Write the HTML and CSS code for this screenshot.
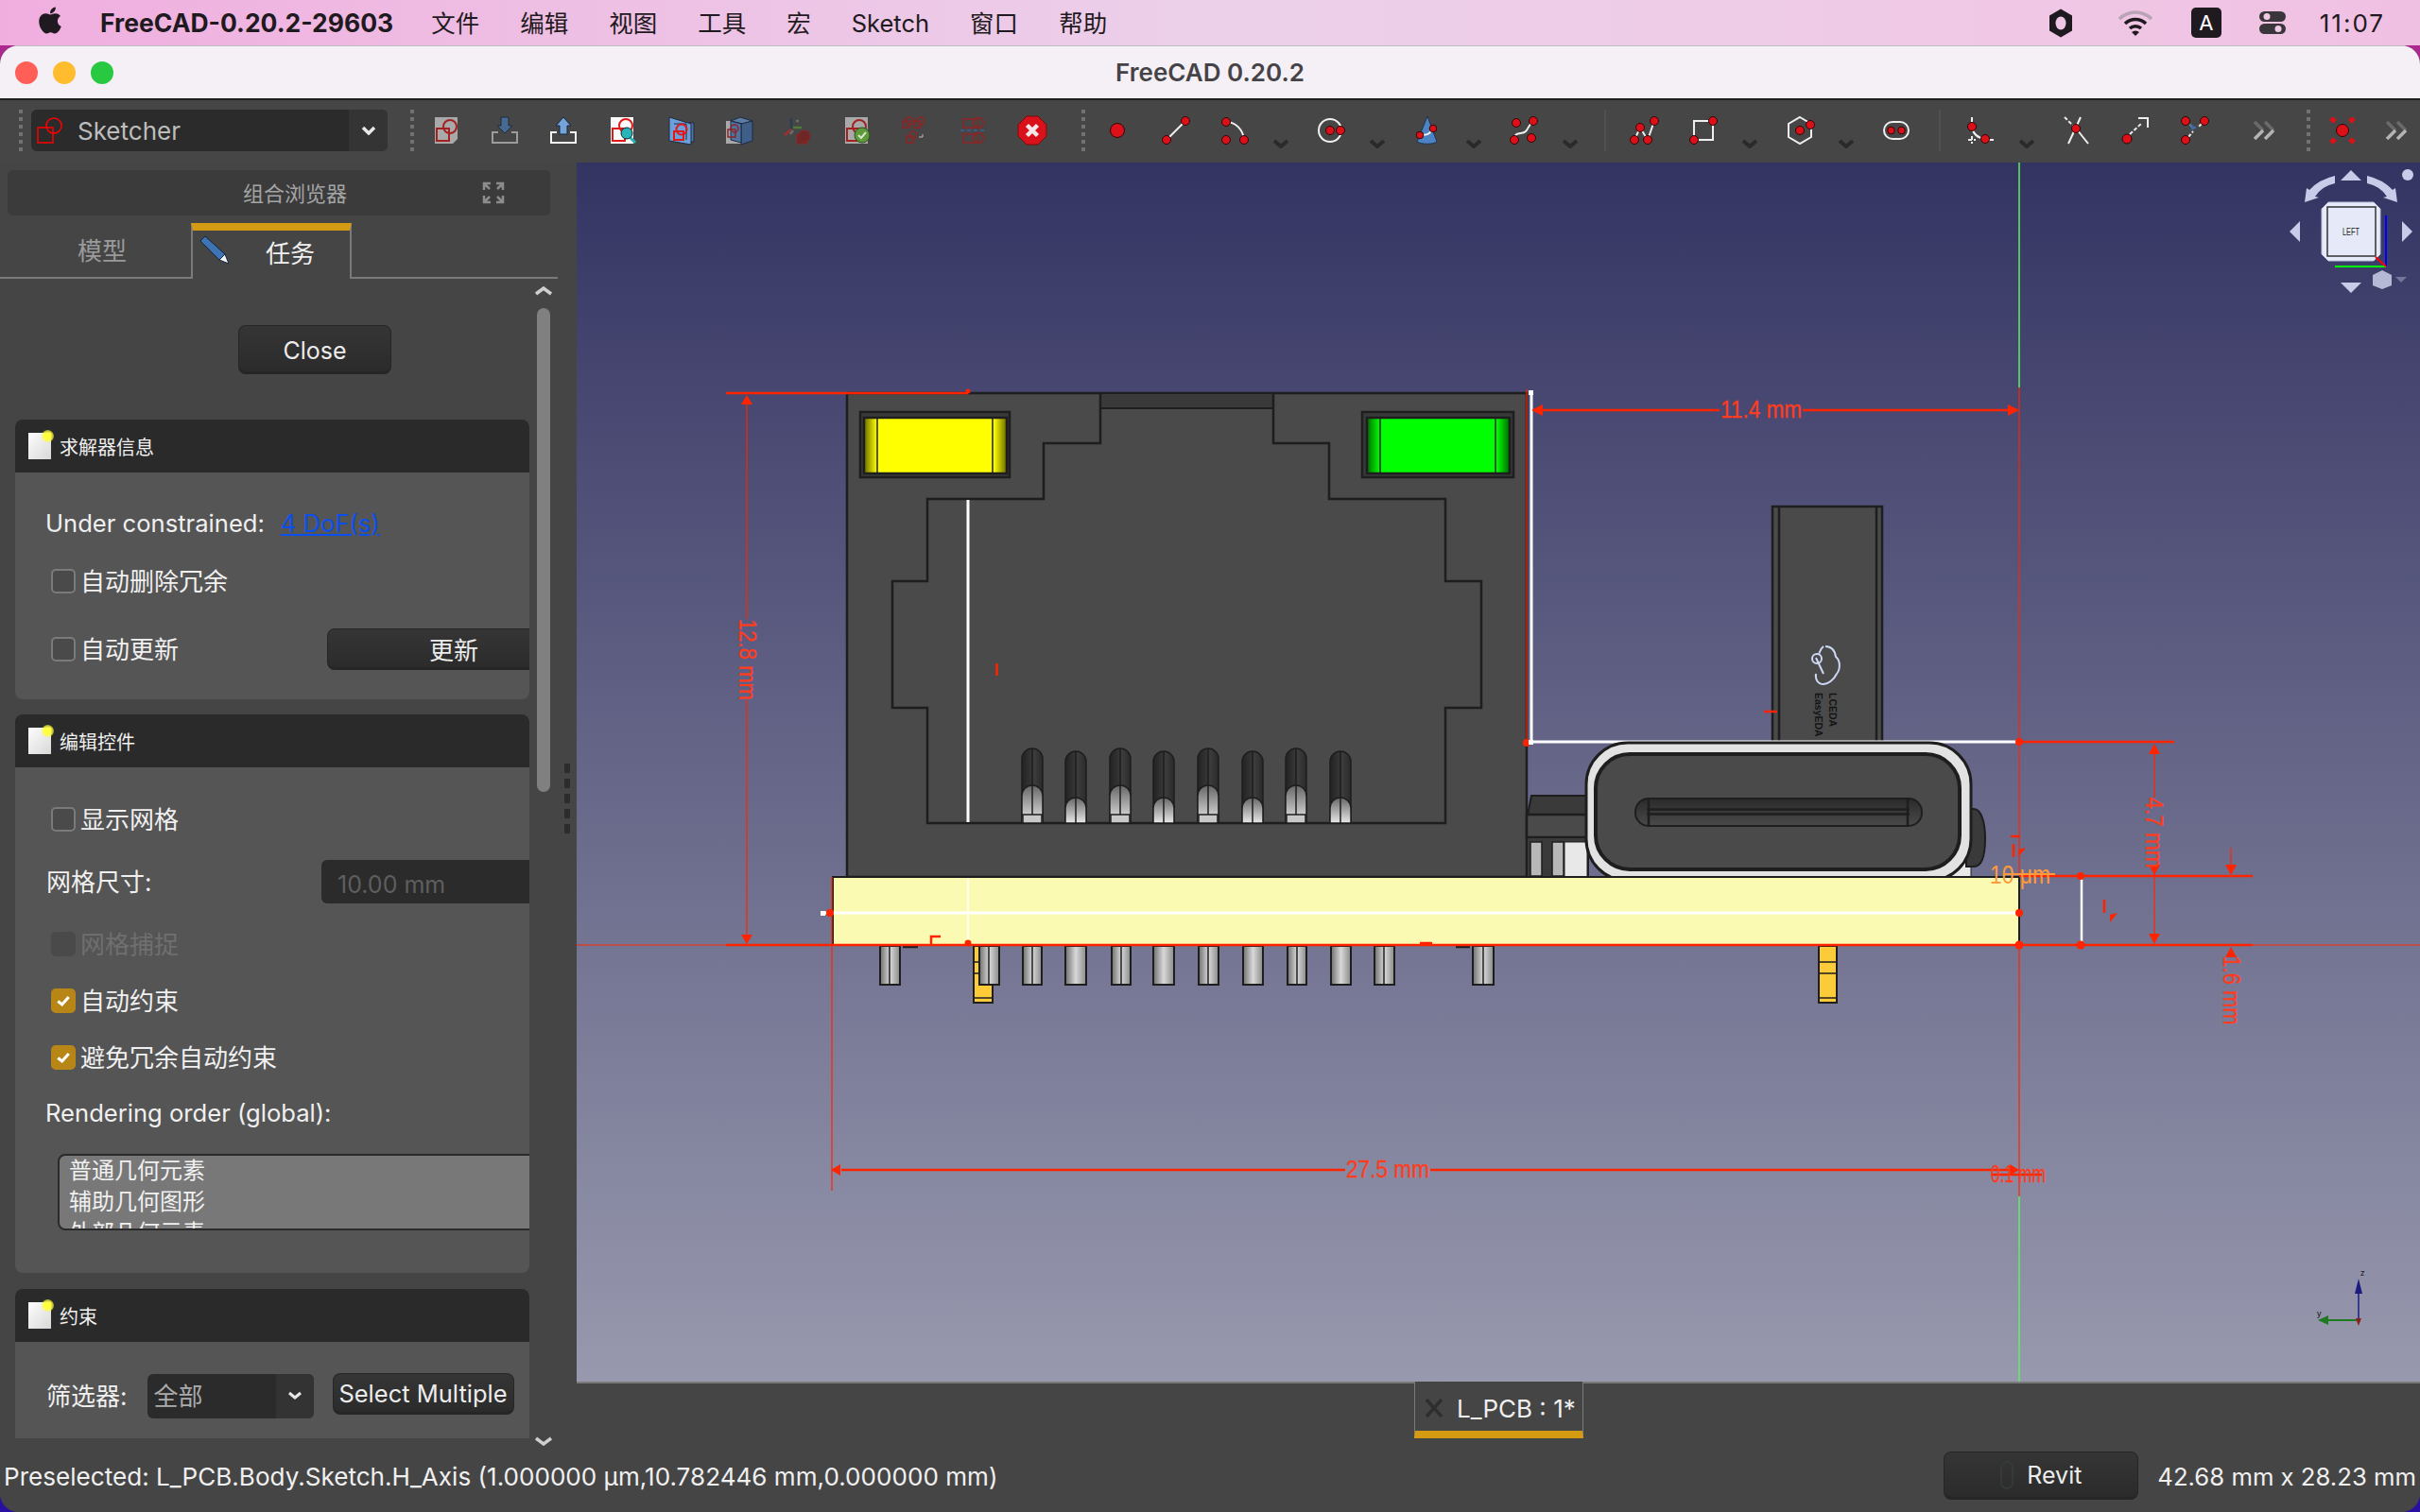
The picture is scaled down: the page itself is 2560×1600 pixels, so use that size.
FILE: index.html
```html
<!DOCTYPE html>
<html lang="zh-CN">
<head>
    <meta charset="UTF-8">
    <meta name="viewport" content="width=device-width, initial-scale=1.0">
    <title>FreeCAD 0.20.2</title>
    <link rel="stylesheet" href="styles.css">
</head>
<body>
    <!-- macOS menu bar -->
    <header class="menubar">
        <svg class="apple" viewBox="3 2 18 20"><path d="M17.05 20.28c-.98.95-2.05.8-3.08.35-1.09-.46-2.09-.48-3.24 0-1.44.62-2.2.44-3.06-.35C2.79 15.25 3.51 7.59 9.05 7.31c1.35.07 2.29.74 3.08.8 1.18-.24 2.31-.93 3.57-.84 1.51.12 2.65.72 3.4 1.8-3.12 1.87-2.38 5.98.48 7.13-.57 1.5-1.31 2.99-2.54 4.09zM12.03 7.25c-.15-2.23 1.66-4.07 3.74-4.25.29 2.58-2.34 4.5-3.74 4.25z"/></svg>
        <span class="app-name">FreeCAD-0.20.2-29603</span>
        <nav class="menu">
            <span>文件</span><span>编辑</span><span>视图</span><span>工具</span><span>宏</span><span>Sketch</span><span>窗口</span><span>帮助</span>
        </nav>
        <div class="tray">
            <svg class="tray-hex" viewBox="0 0 24 30"><path d="M12 0 24 7v16l-12 7L0 23V7z"/><ellipse class="tray-hole" cx="12" cy="15" rx="5.5" ry="7"/></svg>
            <svg class="tray-wifi" viewBox="0 0 40 28"><path class="wifi-off" d="M3 10a24 24 0 0 1 34 0"/><path d="M9 15a16 16 0 0 1 22 0"/><path d="M14 20a9 9 0 0 1 12 0"/><path class="wifi-tip" d="M20 28l-4-4a6 6 0 0 1 8 0z"/></svg>
            <span class="tray-a">A</span>
            <svg class="tray-cc" viewBox="0 0 28 24"><rect class="cc-dark" x="0" y="0" width="28" height="11" rx="5.5"/><circle class="cc-light" cx="8" cy="5.5" r="3.5"/><rect class="cc-dark" x="0" y="13" width="28" height="11" rx="5.5"/><circle class="cc-light" cx="20" cy="18.5" r="3.5"/></svg>
            <span class="clock">11:07</span>
        </div>
    </header>

    <div class="window">
        <div class="titlebar">
            <i class="light light-red"></i><i class="light light-yellow"></i><i class="light light-green"></i>
            <span class="window-title">FreeCAD 0.20.2</span>
        </div>

        <!-- toolbar -->
        <div class="toolbar">
            <i class="grip grip-first"></i>
            <div class="wb-combo">
                <svg class="wb-icon" viewBox="0 0 28 28"><rect class="sk-red" x="1" y="11" width="16" height="16"/><circle class="sk-red" cx="18" cy="9" r="8"/></svg>
                <span class="wb-name">Sketcher</span>
                <span class="wb-arrow"><svg viewBox="0 0 16 10"><path d="M2 2l6 6 6-6"/></svg></span>
            </div>
            <i class="grip grip-second"></i>

            <span class="tool"><svg viewBox="0 0 32 32"><path class="page-gray" d="M4 2h24v23l-5 5H4z"/><rect class="dr" x="6" y="14" width="13" height="13"/><circle class="dr" cx="20" cy="12" r="7"/></svg></span>
            <span class="tool"><svg viewBox="0 0 32 32"><path class="tray-gray" d="M9 18H3v11h26V18h-6"/><path class="arrow-dark" d="M12 2h8v9h4l-8 8-8-8h4z"/></svg></span>
            <span class="tool"><svg viewBox="0 0 32 32"><path class="tray-white" d="M9 18H3v11h26V18h-6"/><path class="arrow-light" d="M16 2l8 9h-4v9h-8v-9H8z"/></svg></span>
            <span class="tool"><svg viewBox="0 0 32 32"><rect class="page-white" x="4" y="2" width="24" height="28"/><rect class="red" x="6" y="14" width="13" height="13"/><circle class="red" cx="20" cy="11" r="7"/><path class="mag-handle" d="M24 23l6 6"/><circle class="mag" cx="21" cy="19" r="6"/></svg></span>
            <span class="tool"><svg viewBox="0 0 32 32"><path class="box-side" d="M25 8h5v20h-5z"/><path class="plane" d="M4 2l23 7v22L4 27z"/><path class="plane-line" d="M9 9h13v17"/><rect class="red" x="9" y="17" width="10" height="9"/><circle class="red" cx="17" cy="15" r="5.5"/></svg></span>
            <span class="tool"><svg viewBox="0 0 32 32"><path class="page-gray" d="M2 6h17v24H2z"/><path class="box-top" d="M7 6l10-4 13 4-10 3z"/><path class="box-front" d="M18 9l12-3v21l-12 4z"/><path class="box-side" d="M7 6l11 3v20l-11-3z"/><rect class="dr-thin" x="4" y="15" width="8" height="8"/><circle class="dr-thin" cx="11" cy="14" r="4"/></svg></span>
            <span class="tool"><svg viewBox="0 0 32 32"><path class="axis-blue" d="M9 15V3"/><path class="axis-red" d="M9 15l-7 6"/><path class="axis-green" d="M11 13h9"/><path class="axis-gray" d="M14 6h3M11 16l-3 4"/><rect class="dr-fill" x="15" y="20" width="11" height="10"/><circle class="dr-fill" cx="23" cy="22" r="6"/></svg></span>
            <span class="tool"><svg viewBox="0 0 32 32"><rect class="page-gray" x="4" y="2" width="24" height="28"/><rect class="dr" x="6" y="14" width="13" height="13"/><circle class="dr" cx="19" cy="12" r="7"/><circle class="ok" cx="22" cy="21" r="8"/><path class="ok-tick" d="M18 21l3 3 5-6"/></svg></span>
            <span class="tool"><svg viewBox="0 0 32 32"><rect class="dr-thin" x="3" y="6" width="7" height="7"/><circle class="dr-thin" cx="10" cy="6" r="4"/><rect class="dr-thin" x="15" y="6" width="7" height="7"/><circle class="dr-thin" cx="22" cy="6" r="4"/><rect class="dr-thin" x="7" y="22" width="7" height="7"/><circle class="dr-thin" cx="14" cy="21" r="4"/><path class="hook" d="M24 20v3h-4"/></svg></span>
            <span class="tool"><svg viewBox="0 0 32 32"><rect class="dr-thin" x="5" y="4" width="15" height="9"/><circle class="dr-thin" cx="21" cy="8" r="5.5"/><path class="mirror" d="M2 16h27"/><rect class="dr-thin" x="5" y="20" width="15" height="9"/><circle class="dr-thin" cx="21" cy="24" r="5.5"/></svg></span>
            <span class="tool"><svg viewBox="0 0 32 32"><path class="stop" d="M10 1h12l9 9v12l-9 9H10l-9-9V10z"/><path class="stop-x" d="M10.500 10.500l11 11M21.500 10.500l-11 11"/></svg></span>

            <i class="grip grip-third"></i>

            <span class="tool"><svg viewBox="0 0 32 32"><circle class="pt" cx="16" cy="16" r="7.500"/></svg></span>
            <span class="tool"><svg viewBox="0 0 32 32"><path class="wl" d="M6 26L26 6"/><circle class="pt" cx="6" cy="26" r="4.500"/><circle class="pt" cx="26" cy="6" r="4.500"/></svg></span>
            <span class="tool"><svg viewBox="0 0 32 32"><path class="wl" d="M7 7c10 0 18 8 19 19"/><circle class="pt" cx="7" cy="7" r="4.500"/><circle class="pt" cx="7" cy="26" r="4.500"/><circle class="pt" cx="26" cy="26" r="4.500"/></svg></span>
            <span class="drop"><svg viewBox="0 0 18 10"><path d="M2 2l7 6 7-6"/></svg></span>
            <span class="tool"><svg viewBox="0 0 32 32"><circle class="wl" cx="15" cy="16" r="12"/><circle class="pt" cx="15" cy="16" r="4.500"/><circle class="pt" cx="26" cy="16" r="4.500"/></svg></span>
            <span class="drop"><svg viewBox="0 0 18 10"><path d="M2 2l7 6 7-6"/></svg></span>
            <span class="tool"><svg viewBox="0 0 32 32"><path class="cone" d="M16 1l10 27c-4 3-16 3-21 0z"/><path class="wl" d="M7 20c8 2 12 0 15-7"/><circle class="pt" cx="8" cy="21" r="3.800"/><circle class="pt" cx="22" cy="14" r="3.800"/></svg></span>
            <span class="drop"><svg viewBox="0 0 18 10"><path d="M2 2l7 6 7-6"/></svg></span>
            <span class="tool"><svg viewBox="0 0 32 32"><path class="wl" d="M6 26c0-10 8-5 12-9 3-3 3-7 8-11"/><circle class="pt" cx="8" cy="8" r="4.500"/><circle class="pt" cx="26" cy="6" r="4.500"/><circle class="pt" cx="6" cy="26" r="4.500"/><circle class="pt" cx="24" cy="24" r="4.500"/></svg></span>
            <span class="drop"><svg viewBox="0 0 18 10"><path d="M2 2l7 6 7-6"/></svg></span>
            <i class="sep sep-a"></i>
            <span class="tool"><svg viewBox="0 0 32 32"><path class="wl" d="M5 26l6-13 8 13 7-20"/><circle class="pt" cx="26" cy="6" r="4.500"/><circle class="pt" cx="11" cy="13" r="4.500"/><circle class="pt" cx="5" cy="26" r="4.500"/><circle class="pt" cx="19" cy="26" r="4.500"/></svg></span>
            <span class="tool"><svg viewBox="0 0 32 32"><path class="wl" d="M6 26V6h20v20z"/><circle class="pt" cx="26" cy="6" r="4.500"/><circle class="pt" cx="6" cy="26" r="4.500"/></svg></span>
            <span class="drop"><svg viewBox="0 0 18 10"><path d="M2 2l7 6 7-6"/></svg></span>
            <span class="tool"><svg viewBox="0 0 32 32"><path class="wl" d="M16 2l12 7v14l-12 7-12-7V9z"/><circle class="pt" cx="16" cy="16" r="4.500"/><circle class="pt" cx="27" cy="10" r="4.500"/></svg></span>
            <span class="drop"><svg viewBox="0 0 18 10"><path d="M2 2l7 6 7-6"/></svg></span>
            <span class="tool"><svg viewBox="0 0 32 32"><rect class="wl" x="3" y="7" width="26" height="18" rx="9"/><circle class="pt" cx="10.500" cy="16" r="3.800"/><circle class="pt" cx="21.500" cy="16" r="3.800"/></svg></span>
            <i class="sep sep-b"></i>
            <span class="tool"><svg viewBox="0 0 32 32"><path class="wl" d="M7 2v10M22 26h8M7 12c1 7 6 12 14 13"/><path class="wl-dash" d="M7 22v8M3 26h8"/><circle class="pt" cx="7" cy="12" r="4.500"/><circle class="pt" cx="21" cy="25" r="4.500"/></svg></span>
            <span class="drop"><svg viewBox="0 0 18 10"><path d="M2 2l7 6 7-6"/></svg></span>
            <span class="tool"><svg viewBox="0 0 32 32"><path class="wl" d="M20 2L7 30M16 15l12 15"/><path class="wl-dash" d="M3 2l10 10"/><circle class="pt" cx="15" cy="14" r="4.500"/></svg></span>
            <span class="tool"><svg viewBox="0 0 32 32"><path class="wl" d="M19 3h10v10"/><path class="wl-dash" d="M10 20l13-12"/><circle class="pt" cx="7" cy="25" r="5"/></svg></span>
            <span class="tool"><svg viewBox="0 0 32 32"><path class="wl-dash" d="M12 10l3 4M24 9l-4 4M10 23l5-6"/><path class="arrow-small" d="M11 9l8 4-5 3z"/><circle class="pt" cx="7" cy="6" r="4.500"/><circle class="pt" cx="27" cy="6" r="4.500"/><circle class="pt" cx="7" cy="26" r="4.500"/></svg></span>
            <span class="more more-a"><svg viewBox="0 0 28 20"><path class="more-up" d="M3 1l9 9M14 1l9 9"/><path class="more-down" d="M12 10l-9 9M23 10l-9 9"/></svg></span>
            <i class="grip grip-fourth"></i>
            <span class="tool"><svg viewBox="0 0 32 32"><path class="red-bar" d="M4 3l4 4M28 3l-4 4M4 29l4-4M28 29l-4-4"/><circle class="pt" cx="16" cy="16" r="6.500"/></svg></span>
            <span class="more more-b"><svg viewBox="0 0 28 20"><path class="more-up" d="M3 1l9 9M14 1l9 9"/><path class="more-down" d="M12 10l-9 9M23 10l-9 9"/></svg></span>
        </div>

        <div class="main">
            <!-- combo view -->
            <aside class="sidebar">
                <div class="dock-title">
                    <span class="dock-name">组合浏览器</span>
                    <svg class="dock-expand" viewBox="0 0 24 24"><path d="M9 2H2v7M15 2h7v7M9 22H2v-7M15 22h7v-7M3 3l5 5M21 3l-5 5M3 21l5-5M21 21l-5-5"/></svg>
                </div>
                <div class="tabs">
                    <span class="tab">模型</span>
                    <span class="tab tab-active">
                        <svg class="pencil" viewBox="0 0 30 30"><path class="pencil-body" d="M5 0L0 5l20 20 6-6z"/><path class="pencil-tip" d="M20 25l10 4-4-10z"/></svg>
                        任务
                    </span>
                </div>
                <div class="task-area">
                    <div class="task-scroll">
                        <button class="btn btn-close">Close</button>

                        <section class="panel panel-solver">
                            <h3 class="panel-head"><i class="led"></i>求解器信息</h3>
                            <div class="panel-body">
                                <div class="row row-latin"><span>Under constrained:</span><a class="dof">4 DoF(s)</a></div>
                                <label class="row row-gap"><i class="check"></i>自动删除冗余</label>
                                <div class="row row-update"><label class="row-inner"><i class="check"></i>自动更新</label><button class="btn btn-update">更新</button></div>
                            </div>
                        </section>

                        <section class="panel panel-edit">
                            <h3 class="panel-head"><i class="led"></i>编辑控件</h3>
                            <div class="panel-body">
                                <label class="row"><i class="check"></i>显示网格</label>
                                <div class="row row-20"><span class="grid-label">网格尺寸:</span><span class="spin">10.00 mm</span></div>
                                <label class="row row-20 row-off"><i class="check"></i>网格捕捉</label>
                                <label class="row row-14"><i class="check check-on"><svg viewBox="0 0 25 25"><path d="M6 13l5 4 8-9"/></svg></i>自动约束</label>
                                <label class="row row-14"><i class="check check-on"><svg viewBox="0 0 25 25"><path d="M6 13l5 4 8-9"/></svg></i>避免冗余自动约束</label>
                                <div class="row row-12 row-latin">Rendering order (global):</div>
                                <div class="order-list">
                                    <div>普通几何元素</div>
                                    <div>辅助几何图形</div>
                                    <div>外部几何元素</div>
                                </div>
                            </div>
                        </section>

                        <section class="panel panel-constraints">
                            <h3 class="panel-head"><i class="led"></i>约束</h3>
                            <div class="panel-body">
                                <div class="row">
                                    <span class="filter-label">筛选器:</span>
                                    <span class="filter-combo"><span class="filter-value">全部</span><span class="filter-arrow"><svg viewBox="0 0 16 10"><path d="M2 2l6 5 6-5"/></svg></span></span>
                                    <button class="btn btn-multi">Select Multiple</button>
                                </div>
                            </div>
                        </section>
                    </div>
                    <div class="scrollbar">
                        <svg class="scroll-arrow" viewBox="0 0 20 10"><path d="M2 8l8-6 8 6"/></svg>
                        <div class="scroll-track"><div class="scroll-thumb"></div></div>
                        <svg class="scroll-arrow" viewBox="0 0 20 10"><path d="M2 2l8 6 8-6"/></svg>
                    </div>
                    <div class="splitter"></div>
                </div>
            </aside>

            <div class="center">
                <!-- 3D view, drawn in window coordinates -->
                <svg class="viewport" viewBox="610 172 1950 1290">
                    <defs>
                        <linearGradient id="pinShade"><stop offset="0" stop-color="#6f6f6f"/><stop offset=".5" stop-color="#d8d8d8"/><stop offset="1" stop-color="#8a8a8a"/></linearGradient>
                        <linearGradient id="fingerShade" x1="0" y1="0" x2="0" y2="1"><stop offset="0" stop-color="#666"/><stop offset="1" stop-color="#e8e8e8"/></linearGradient>
                        <linearGradient id="fingerDark"><stop offset="0" stop-color="#222"/><stop offset=".6" stop-color="#3c3c3c"/><stop offset="1" stop-color="#2a2a2a"/></linearGradient>
                        <linearGradient id="slotShade" x1="0" y1="0" x2="0" y2="1"><stop offset="0" stop-color="#2a2a2a"/><stop offset="1" stop-color="#4a4a4a"/></linearGradient>
                        <linearGradient id="ledYellow"><stop offset="0" stop-color="#6b6b00"/><stop offset=".09" stop-color="#ff0"/><stop offset=".91" stop-color="#ff0"/><stop offset="1" stop-color="#6b6b00"/></linearGradient>
                        <linearGradient id="ledGreen"><stop offset="0" stop-color="#006b00"/><stop offset=".09" stop-color="#0f0"/><stop offset=".91" stop-color="#0f0"/><stop offset="1" stop-color="#006b00"/></linearGradient>
                        <g id="fingerA">
                            <path class="finger-dark" d="M-11 871V803a11 11 0 0 1 22 0V871Z"/>
                            <path class="finger-light" d="M-11 871V842a11 11 0 0 1 22 0V871Z"/>
                            <path class="finger-band" d="M-10 862h20v9h-20z"/>
                            <path class="edge-thin" d="M0 792V862"/>
                        </g>
                        <g id="fingerB">
                            <path class="finger-dark" d="M-11 871V806a11 11 0 0 1 22 0V871Z"/>
                            <path class="finger-light" d="M-11 871V855a11 11 0 0 1 22 0V871Z"/>
                            <path class="edge-thin" d="M0 795V871"/>
                        </g>
                    </defs>

                    <path class="axis-v-green" d="M2136 172V410M2136 1266V1462"/>
                    <path class="dim-thin" d="M2136 410V1266"/>

                    <!-- pins under the board -->
                    <g class="pin-yellow">
                        <rect x="1030" y="1001" width="20" height="60"/>
                        <rect x="1924" y="1001" width="19" height="60"/>
                    </g>
                    <path class="edge-thin" d="M1030 1018h20M1030 1030h20M1030 1056h20M1924 1018h19M1924 1030h19M1924 1056h19"/>
                    <g class="pins">
                        <rect x="931" y="1001" width="21" height="41"/>
                        <rect x="1036" y="1001" width="21" height="41"/>
                        <rect x="1082" y="1001" width="20" height="41"/>
                        <rect x="1127" y="1001" width="22" height="41"/>
                        <rect x="1176" y="1001" width="20" height="41"/>
                        <rect x="1220" y="1001" width="22" height="41"/>
                        <rect x="1268" y="1001" width="21" height="41"/>
                        <rect x="1315" y="1001" width="21" height="41"/>
                        <rect x="1362" y="1001" width="20" height="41"/>
                        <rect x="1408" y="1001" width="21" height="41"/>
                        <rect x="1454" y="1001" width="21" height="41"/>
                        <rect x="1558" y="1001" width="22" height="41"/>
                    </g>
                    <path class="edge-thin" d="M941 1001v41M1046 1001v41M1092 1001v41M1186 1001v41M1278 1001v41M1372 1001v41M1464 1001v41M1569 1001v41"/>
                    <path class="edge" d="M955 1002h16M1540 1002h15"/>

                    <!-- RJ45 housing -->
                    <rect class="body" x="896" y="416" width="719" height="512"/>
                    <rect class="body-dark" x="1164" y="416" width="183" height="16"/>
                    <path class="edge" d="M1164 416V469H1104V528H981V615H944V749H981V871H1529V749H1567V615H1529V528H1406V469H1347V416"/>
                    <rect class="led-frame" x="910" y="436" width="158" height="69"/>
                    <rect class="led-yellow" x="914" y="442" width="151" height="59"/>
                    <path class="edge-thin" d="M928 442v59M1050 442v59"/>
                    <rect class="led-frame" x="1441" y="436" width="160" height="69"/>
                    <rect class="led-green" x="1446" y="442" width="151" height="59"/>
                    <path class="edge-thin" d="M1460 442v59M1582 442v59"/>
                    <use href="#fingerA" x="1092"/><use href="#fingerB" x="1138"/>
                    <use href="#fingerA" x="1185"/><use href="#fingerB" x="1231"/>
                    <use href="#fingerA" x="1278"/><use href="#fingerB" x="1325"/>
                    <use href="#fingerA" x="1371"/><use href="#fingerB" x="1418"/>

                    <!-- switch: tall body, then the parts behind the USB shell -->
                    <rect class="body" x="1875" y="536" width="116" height="250"/>
                    <path class="edge" d="M1882 536v250M1985 536v250"/>
                    <path class="logo" d="M1931 684c7 0 10 5 11 11 5 4 5 13 1 18-3 6-9 11-14 11-6 0-9-5-8-11M1921 696l8 17M1929 684c-4 3-4 7-5 8"/>
                    <circle class="logo" cx="1922" cy="697" r="5"/>
                    <text class="logo-text" transform="translate(1935 733) rotate(90)">LCEDA</text>
                    <text class="logo-text" transform="translate(1920 733) rotate(90)">EasyEDA</text>

                    <path class="body-dark" d="M1620 842H1680V862H1616z"/>
                    <rect class="body" x="1615" y="862" width="65" height="24"/>
                    <rect class="body-dark" x="1615" y="886" width="65" height="42"/>
                    <rect class="pin-small" x="1619" y="891" width="12" height="36"/>
                    <rect class="pin-small" x="1642" y="891" width="12" height="36"/>
                    <rect class="block-white" x="1655" y="891" width="24" height="37"/>
                    <rect class="block-white" x="2060" y="896" width="25" height="32"/>
                    <path class="body-dark" d="M2080 856h8c8 0 12 15 12 31s-2 30-12 30h-8z"/>

                    <path class="sel-line" d="M1620 416V785H2136"/>
                    <path class="dim-thin" d="M1615 412V785"/>

                    <!-- USB-C shell -->
                    <rect class="usb-shell" x="1678" y="786" width="407" height="146" rx="44"/>
                    <rect class="usb-face" x="1688" y="798" width="385" height="122" rx="36"/>
                    <rect class="usb-slot" x="1730" y="845" width="303" height="29" rx="14"/>
                    <path class="edge" d="M1744 846v27M2018 846v27M1742 856.500H2020M1742 861.500H2020"/>

                    <!-- board -->
                    <rect class="pcb" x="881" y="928" width="1255" height="72"/>
                    <path class="sel-line" d="M870 966H2136"/>
                    <path class="sel-faint" d="M1024 930V999"/>
                    <path class="sel-line" d="M1024 529V870"/>
                    <path class="sel-thin" d="M2202 927V1000"/>

                    <!-- constraints -->
                    <path class="dim-thin" d="M610 1000H2560"/>
                    <path class="dim" d="M768 1000H2383M2136 927H2383M2136 785H2300M768 416H1024"/>
                    <path class="dim-thin" d="M790 426V655M790 741V990M880 928V1260M2279 797V844M2279 919V990M2360 897V920M2360 1008V1012"/>
                    <path class="dim" d="M1632 434H1819M1907 434H2126M890 1238H1423M1513 1238H2126"/>
                    <path class="dim-fill" d="M790 418l6 10h-12zM790 999l6-10h-12zM1620 434l12-6v12zM2136 434l-12-6v12zM879 1238l10-6v12zM2136 1238l-10-6v12zM2279 787l6 11h-12zM2279 926l6-11h-12zM2279 999l6-11h-12zM2360 926l6-11h-12zM2360 1002l6 11h-12z"/>
                    <path class="dim" d="M1054.500 702v13M2127 885h10M2226 952v14M2130 893v14"/>
                    <path class="dim" d="M985 1000v-9h10M1502 998h13M1866 753h14"/>
                    <path class="dim-fill" d="M2232 976v-8l8-2zM2135 907v-8l8-2z"/>
                    <path class="orange-line" d="M2120 925H2174"/>
                    <path class="dim" d="M2106 1243H2160"/>
                    <g class="dim-pts">
                        <circle cx="2136" cy="1000" r="4.500"/><circle cx="2201" cy="927" r="4"/><circle cx="2201" cy="1000" r="4.500"/>
                        <circle cx="1024" cy="998" r="3.500"/><circle cx="2136" cy="966" r="4"/><circle cx="878" cy="966" r="4"/>
                        <circle cx="1024" cy="414" r="2.500"/><circle cx="1615" cy="786" r="4"/><circle cx="2136" cy="785" r="4"/>
                    </g>
                    <rect class="sel-pt" x="1617" y="413" width="5" height="5"/>
                    <rect class="sel-pt" x="1617" y="783" width="5" height="5"/>
                    <rect class="sel-pt" x="868" y="964" width="5" height="5"/>

                    <text class="dim-text" transform="translate(782 698) rotate(90)" textLength="86" lengthAdjust="spacingAndGlyphs">12.8 mm</text>
                    <text class="dim-text" x="1863" y="442" textLength="86" lengthAdjust="spacingAndGlyphs">11.4 mm</text>
                    <text class="dim-text" transform="translate(2270 881) rotate(90)" textLength="75" lengthAdjust="spacingAndGlyphs">4.7 mm</text>
                    <text class="dim-text" transform="translate(2352 1048) rotate(90)" textLength="73" lengthAdjust="spacingAndGlyphs">1.6 mm</text>
                    <text class="dim-text" x="1468" y="1246" textLength="88" lengthAdjust="spacingAndGlyphs">27.5 mm</text>
                    <text class="dim-text" x="2135" y="1251" textLength="58" lengthAdjust="spacingAndGlyphs">0.1 mm</text>
                    <text class="dim-orange" x="2137" y="935" textLength="64" lengthAdjust="spacingAndGlyphs">10 μm</text>

                    <!-- navigation cube -->
                    <g class="nav">
                        <path d="M2476 191l11-11 11 11zM2476 299h22l-11 11zM2433 234l-11 11 11 11zM2541 234l11 11-11 11z"/>
                        <path d="M2470 186v8q-14 3-21 14l4 1-15 5 2-15 3 2q10-11 27-15zM2504 186v8q14 3 21 14l-4 1 15 5-2-15-3 2q-10-11-27-15z"/>
                        <circle cx="2547" cy="185" r="6"/>
                        <path class="nav-cube-small" d="M2510 291l10-5 10 5v11l-10 4-10-4z"/>
                        <path class="nav-menu" d="M2534 293h12l-6 6z"/>
                    </g>
                    <path class="nav-face" d="M2463 214h48l7 7v48l-7 7h-48l-7-7v-48z"/>
                    <rect class="nav-square" x="2462" y="219" width="51" height="52"/>
                    <text class="nav-text" x="2487" y="249" textLength="18" lengthAdjust="spacingAndGlyphs">LEFT</text>
                    <path class="ax-b" d="M2524 228v54"/>
                    <path class="ax-g" d="M2470 282h54"/>
                    <path class="ax-r" d="M2524 282l-11-10"/>

                    <!-- axis cross -->
                    <path class="cross-b" d="M2495 1397V1368"/>
                    <path class="cross-bh" d="M2495 1353l4 16h-8z"/>
                    <path class="cross-g" d="M2495 1397H2462"/>
                    <path class="cross-gh" d="M2452 1397l11-5v10z"/>
                    <path class="cross-rh" d="M2495 1403l-3-8h6z"/>
                    <text class="cross-text" x="2497" y="1350">z</text>
                    <text class="cross-text" x="2451" y="1393">y</text>
                </svg>

                <div class="mdi-bar">
                    <div class="mdi-tab">
                        <svg viewBox="0 0 20 20"><path d="M2 1l16 18M18 1L2 19"/></svg>
                        <span>L_PCB : 1*</span>
                    </div>
                </div>
            </div>
        </div>

        <footer class="statusbar">
            <span class="status-msg">Preselected: L_PCB.Body.Sketch.H_Axis (1.000000 μm,10.782446 mm,0.000000 mm)</span>
            <button class="btn btn-nav"><i class="nav-glyph"></i>Revit</button>
            <span class="status-size">42.68 mm x 28.23 mm</span>
        </footer>
    </div>
</body>
</html>
```

FILE: styles.css
```css
* {
    box-sizing: border-box;
}

html, body {
    margin: 0;
    height: 100%;
}

body {
    width: 2560px;
    height: 1600px;
    overflow: hidden;
    display: flex;
    flex-direction: column;
    font-family: Inter, "Noto Sans CJK SC", sans-serif;
    font-size: 26px;
    color: #f0f0f0;
    background: linear-gradient(180deg, #b02a8e 0%, #5a1a9a 60%, #2a10a0 100%);
}

svg {
    display: block;
}

/* Menu bar */
.menubar {
    height: 48px;
    flex: none;
    display: flex;
    align-items: center;
    color: #1f1a20;
    background: linear-gradient(90deg, #f0aedf 0%, #eec0e4 25%, #ecd0ea 50%, #efcbe7 75%, #f0c0e2 100%);
}

.apple {
    width: 28px;
    height: 31px;
    margin: -6px 0 0 39px;
    fill: #1f1a20;
}

.app-name {
    margin-left: 39px;
    font-weight: 700;
    font-size: 26.5px;
}

.menu {
    display: flex;
    align-items: baseline;
    gap: 43px;
    margin-left: 40px;
    padding-bottom: 3px;
    font-size: 25.5px;
}

.tray {
    margin-left: auto;
    display: flex;
    align-items: center;
    padding-right: 37px;
}

.tray-hex {
    width: 24px;
    height: 31px;
    fill: #1f1a20;
}

.tray-hole {
    fill: #eec6e6;
}

.tray-wifi {
    width: 40px;
    height: 28px;
    margin-left: 47px;
    fill: none;
    stroke: #1f1a20;
    stroke-width: 3.5px;
}

.wifi-off {
    stroke: #b8a4b6;
}

.wifi-tip {
    fill: #1f1a20;
    stroke: none;
}

.tray-a {
    width: 32px;
    height: 32px;
    margin-left: 39px;
    border-radius: 5px;
    background: #1f1a20;
    color: #fff;
    font-size: 22px;
    line-height: 32px;
    text-align: center;
}

.tray-cc {
    width: 28px;
    height: 24px;
    margin-left: 40px;
}

.cc-dark {
    fill: #3b363c;
}

.cc-light {
    fill: #efcbe7;
}

.clock {
    margin-left: 36px;
    font-size: 26px;
    letter-spacing: 2px;
}

/* Window */
.window {
    flex: 1;
    display: flex;
    flex-direction: column;
    border-radius: 20px;
    overflow: hidden;
    background: #454545;
}

.titlebar {
    height: 58px;
    flex: none;
    position: relative;
    display: flex;
    align-items: center;
    gap: 16px;
    padding-left: 16px;
    background: #f5f0f6;
    border-top: 1px solid #bcbcc4;
    border-bottom: 2px solid #1e1e1e;
}

.light {
    width: 24px;
    height: 24px;
    border-radius: 50%;
}

.light-red {
    background: #ff5f57;
}

.light-yellow {
    background: #febc2e;
}

.light-green {
    background: #28c840;
}

.window-title {
    position: absolute;
    left: 0;
    right: 0;
    text-align: center;
    font-weight: 600;
    font-size: 26px;
    color: #454347;
}

/* Toolbar */
.toolbar {
    height: 66px;
    flex: none;
    display: flex;
    gap: 2px;
    padding: 10px 0 0 16px;
    align-items: flex-start;
    background: #464646;
}

.grip {
    width: 12px;
    height: 44px;
    flex: none;
    background: conic-gradient(#727272 25%, transparent 0) 0 0 / 8px 8px;
}

.grip-first {
    margin-right: 3px;
}

.grip-second {
    margin: 0 -2px 0 18px;
}

.grip-third {
    margin: 0 -2px 0 16px;
}

.grip-fourth {
    margin: 0 -2px 0 24px;
}

.wb-combo {
    width: 377px;
    height: 44px;
    flex: none;
    display: flex;
    align-items: center;
    background: #2b2b2b;
    border-radius: 6px;
    overflow: hidden;
}

.wb-icon {
    width: 28px;
    height: 28px;
    margin-left: 6px;
    fill: none;
}

.sk-red {
    fill: none;
    stroke: #f00;
    stroke-width: 1.500px;
}

.wb-name {
    margin-left: 15px;
    font-size: 26px;
    color: #bdbdbd;
}

.wb-arrow {
    width: 41px;
    height: 100%;
    margin-left: auto;
    display: flex;
    align-items: center;
    justify-content: center;
    background: #343434;
}

.wb-arrow svg {
    width: 16px;
    height: 10px;
    fill: none;
    stroke: #e8e8e8;
    stroke-width: 3.500px;
}

.tool {
    width: 60px;
    height: 44px;
    flex: none;
    display: flex;
    align-items: center;
    justify-content: center;
}

.tool svg {
    width: 32px;
    height: 32px;
    overflow: visible;
}

.drop {
    width: 38px;
    height: 44px;
    flex: none;
    display: flex;
    align-items: flex-end;
    padding: 0 0 3px 8px;
}

.drop svg {
    width: 18px;
    height: 10px;
    fill: none;
    stroke: #2a2a2a;
    stroke-width: 4px;
}

.sep {
    width: 2px;
    height: 44px;
    flex: none;
    background: #505050;
}

.sep-a {
    margin: 0 9px 0 13px;
}

.sep-b {
    margin: 0 10px 0 13px;
}

.more {
    width: 28px;
    height: 20px;
    flex: none;
    margin-top: 12px;
}

.more svg {
    width: 28px;
    height: 20px;
    fill: none;
    stroke-width: 3.500px;
}

.more-up {
    stroke: #6a6a6a;
}

.more-down {
    stroke: #b4b4b4;
}

.more-a {
    margin-left: 29px;
}

.more-b {
    margin-left: 12px;
}

/* Toolbar icon shapes */
.pt {
    fill: #dc1018;
    stroke: #2e0606;
    stroke-width: 1px;
}

.wl {
    fill: none;
    stroke: #efefef;
    stroke-width: 2px;
}

.wl-dash {
    fill: none;
    stroke: #e8e8e8;
    stroke-width: 2px;
    stroke-dasharray: 4 2;
}

.page-gray {
    fill: #a9a9a9;
}

.page-white {
    fill: #fbfbfb;
}

.dr {
    fill: none;
    stroke: #a52020;
    stroke-width: 2px;
}

.dr-thin {
    fill: none;
    stroke: #8e2424;
    stroke-width: 1.500px;
}

.dr-fill {
    fill: #6e2626;
    stroke: #8e2424;
}

.red {
    fill: none;
    stroke: #e01818;
    stroke-width: 2px;
}

.tray-gray {
    fill: none;
    stroke: #9c9c9c;
    stroke-width: 2px;
}

.tray-white {
    fill: none;
    stroke: #f5f5f5;
    stroke-width: 2px;
}

.arrow-dark {
    fill: #486a92;
    stroke: #1f2c3e;
}

.arrow-light {
    fill: #74a3da;
    stroke: #14243a;
}

.mag {
    fill: #2ab3b8;
    stroke: #0c2a2c;
}

.mag-handle {
    stroke: #2ab3b8;
    stroke-width: 3px;
}

.plane {
    fill: #6d9fd8;
    stroke: #1c2a44;
}

.plane-line {
    fill: none;
    stroke: #1c2a44;
}

.box-top {
    fill: #5e7da4;
    stroke: #1c2a44;
}

.box-front {
    fill: #3f5f88;
    stroke: #1c2a44;
}

.box-side {
    fill: #4f73a0;
    stroke: #1c2a44;
}

.axis-blue {
    stroke: #2c3e56;
    stroke-width: 2.500px;
}

.axis-red {
    stroke: #a03030;
    stroke-width: 2.500px;
}

.axis-green {
    stroke: #4e7a3a;
    stroke-width: 2.500px;
}

.axis-gray {
    stroke: #6c6c6c;
    stroke-width: 2.500px;
}

.ok {
    fill: #5d9a3a;
    stroke: #2f4f20;
}

.ok-tick {
    fill: none;
    stroke: #d6e6c8;
    stroke-width: 2px;
}

.hook {
    fill: none;
    stroke: #bdbdbd;
}

.mirror {
    stroke: #3c5a86;
    stroke-width: 2px;
    stroke-dasharray: 4 3;
}

.stop {
    fill: #d9111b;
    stroke: #7a0a0a;
}

.stop-x {
    stroke: #f6e8e8;
    stroke-width: 4.500px;
}

.cone {
    fill: #4d83c2;
    stroke: #1f3550;
}

.arrow-small {
    fill: #3f6ea6;
}

.red-bar {
    stroke: #e01018;
    stroke-width: 5px;
}

/* Combo view */
.main {
    height: 1358px;
    flex: none;
    display: flex;
    background: #454545;
}

.sidebar {
    width: 610px;
    flex: none;
    display: flex;
    flex-direction: column;
    padding-top: 8px;
}

.dock-title {
    width: 574px;
    height: 48px;
    flex: none;
    margin-left: 8px;
    display: flex;
    align-items: center;
    border-radius: 5px;
    background: #3b3b3b;
    color: #a4a4a4;
    font-size: 22px;
}

.dock-name {
    flex: 1;
    padding: 0 0 3px 106px;
    text-align: center;
}

.dock-expand {
    width: 24px;
    height: 24px;
    margin-right: 48px;
    fill: none;
    stroke: #8c8c8c;
    stroke-width: 2.500px;
}

.tabs {
    width: 590px;
    height: 59px;
    flex: none;
    margin-top: 8px;
    display: flex;
    border-bottom: 2px solid #7a7a7a;
}

.tab {
    width: 202px;
    display: flex;
    align-items: center;
    justify-content: center;
    padding: 0 0 2px 14px;
    color: #9a9a9a;
    font-size: 26px;
}

.tab-active {
    position: relative;
    width: 170px;
    height: 59px;
    padding: 0 0 7px 40px;
    color: #f0f0f0;
    background: #454545;
    border: 2px solid #7a7a7a;
    border-top: 8px solid #d49a12;
    border-bottom: 0;
}

.pencil {
    position: absolute;
    left: 8px;
    top: 6px;
    width: 30px;
    height: 30px;
}

.pencil-body {
    fill: #3f74b4;
    stroke: #14243a;
}

.pencil-tip {
    fill: #f2f2f2;
    stroke: #14243a;
}

.task-area {
    flex: 1;
    min-height: 0;
    display: flex;
}

.task-scroll {
    width: 544px;
    flex: none;
    margin: 0 8px 8px 16px;
    overflow: hidden;
}

/* Buttons */
.btn {
    display: block;
    padding: 0;
    font-family: inherit;
    font-size: 25px;
    color: #ececec;
    background: linear-gradient(180deg, #353535, #2b2b2b);
    border: 1px solid #262626;
    border-bottom-width: 3px;
    border-radius: 8px;
}

.btn-close {
    width: 162px;
    height: 52px;
    margin: 49px 0 0 236px;
    padding-top: 3px;
}

.btn-update {
    width: 248px;
    height: 44px;
    flex: none;
    margin-left: auto;
    margin-right: -34px;
    padding-left: 20px;
    font-size: 26px;
}

.btn-multi {
    width: 192px;
    height: 44px;
    flex: none;
    margin-left: 20px;
    font-size: 25.500px;
}

.btn-nav {
    width: 206px;
    height: 51px;
    flex: none;
    margin: 0 0 0 auto;
    display: flex;
    align-items: center;
    justify-content: center;
    gap: 14px;
}

.nav-glyph {
    width: 14px;
    height: 30px;
    border-radius: 7px;
    border: 2px solid #343a38;
}

/* Collapsible task panels */
.panel {
    border-radius: 8px;
    overflow: hidden;
    background: #555;
}

.panel-solver {
    margin-top: 48px;
    height: 296px;
}

.panel-edit {
    margin-top: 16px;
    height: 591px;
}

.panel-constraints {
    margin-top: 17px;
    height: 200px;
}

.panel-head {
    height: 56px;
    margin: 0;
    padding-left: 14px;
    display: flex;
    align-items: center;
    gap: 9px;
    background: #2a2a2a;
    font-size: 20px;
    font-weight: 400;
    color: #f0f0f0;
}

.led {
    position: relative;
    width: 24px;
    height: 28px;
    background: linear-gradient(135deg, #fdfdfd, #d8d8d8);
}

.led::after {
    content: "";
    position: absolute;
    top: -3px;
    right: -3px;
    width: 13px;
    height: 13px;
    border-radius: 50%;
    background: radial-gradient(circle, #ffff40 35%, rgba(255, 240, 60, 0.2) 100%);
}

.panel-body {
    padding: 30px 0 0 33px;
}

.panel-edit .panel-body {
    padding-top: 32px;
}

.panel-constraints .panel-body {
    padding-top: 34px;
}

.row, .row-inner {
    display: flex;
    align-items: center;
    height: 46px;
    padding-bottom: 4px;
}

.row-latin {
    margin-left: -1px;
    padding-bottom: 0;
    font-size: 25.6px;
}

.row-inner {
    flex: none;
}

.row-gap {
    margin-top: 16px;
}

.row-update {
    margin-top: 26px;
    padding-bottom: 0;
}

.row-20 {
    margin-top: 20px;
}

.row-14 {
    margin-top: 14px;
}

.row-12 {
    margin-top: 12px;
}

.row-off {
    color: #6f6f6f;
}

.row-off .check {
    border-color: #4a4a4a;
}

.dof {
    margin-left: 17px;
    color: #0a50f0;
    text-decoration: underline;
}

.check {
    width: 26px;
    height: 26px;
    flex: none;
    margin: 4px 5px 0 5px;
    background: #4a4a4a;
    border: 2px solid #7a7a7a;
    border-radius: 5px;
}

.check-on {
    background: #b88616;
    border-color: #b88616;
}

.check-on svg {
    width: 22px;
    height: 22px;
    fill: none;
    stroke: #fff;
    stroke-width: 3.500px;
}

.grid-label {
    width: 291px;
    flex: none;
}

.spin {
    width: 240px;
    height: 46px;
    flex: none;
    margin-top: 4px;
    padding: 6px 0 0 17px;
    background: #2b2b2b;
    border-radius: 6px;
    color: #5e5e5e;
    font-size: 25px;
    line-height: 40px;
}

.order-list {
    width: 520px;
    height: 81px;
    margin: 21px 0 0 12px;
    padding-left: 10px;
    overflow: hidden;
    background: #787878;
    border: 2px solid #2a2a2a;
    border-radius: 8px;
    font-size: 24px;
    line-height: 33px;
}

.order-list div {
    margin-top: -1px;
    margin-bottom: 1px;
}

.filter-label {
    flex: none;
}

.filter-combo {
    width: 176px;
    height: 47px;
    flex: none;
    margin: 4px 0 0 21px;
    padding-bottom: 0;
    display: flex;
    align-items: center;
    overflow: hidden;
    border-radius: 6px;
    background: #2b2b2b;
    color: #ababab;
}

.filter-value {
    flex: 1;
    padding: 0 0 3px 7px;
}

.filter-arrow {
    width: 40px;
    height: 100%;
    display: flex;
    align-items: center;
    justify-content: center;
    background: #333;
}

.filter-arrow svg {
    width: 16px;
    height: 10px;
    fill: none;
    stroke: #e8e8e8;
    stroke-width: 3px;
}

/* Scrollbar and dock splitter */
.scrollbar {
    width: 14px;
    flex: none;
    display: flex;
    flex-direction: column;
    align-items: center;
    padding-top: 8px;
}

.scroll-arrow {
    width: 20px;
    height: 10px;
    flex: none;
    margin: 0 -3px;
    fill: none;
    stroke: #cfcfcf;
    stroke-width: 3.500px;
}

.scroll-track {
    flex: 1;
    width: 14px;
    margin: 13px 0 14px;
}

.scroll-thumb {
    height: 512px;
    border-radius: 7px;
    background: #808080;
}

.splitter {
    width: 6px;
    height: 76px;
    margin: 513px 0 0 15px;
    background: repeating-linear-gradient(180deg, #2c2c2c 0 10px, transparent 10px 16px);
}

/* 3D view */
.center {
    flex: 1;
    min-width: 0;
    display: flex;
    flex-direction: column;
}

.viewport {
    width: 1950px;
    height: 1290px;
    flex: none;
    background: linear-gradient(180deg, #343463 0, #9899ae 1290px);
}

.body {
    fill: #4a4a4a;
    stroke: #1e1e1e;
    stroke-width: 2.500px;
}

.body-dark {
    fill: #3a3a3a;
    stroke: #1e1e1e;
    stroke-width: 2px;
}

.edge {
    fill: none;
    stroke: #1e1e1e;
    stroke-width: 2.500px;
}

.edge-thin {
    fill: none;
    stroke: #1e1e1e;
    stroke-width: 1.500px;
}

.led-frame {
    fill: #3a3a3a;
    stroke: #1e1e1e;
    stroke-width: 2.500px;
}

.led-yellow {
    fill: url(#ledYellow);
    stroke: #1e1e1e;
    stroke-width: 2.500px;
}

.led-green {
    fill: url(#ledGreen);
    stroke: #1e1e1e;
    stroke-width: 2.500px;
}

.finger-dark {
    fill: url(#fingerDark);
    stroke: #1e1e1e;
    stroke-width: 1.500px;
}

.finger-light {
    fill: url(#fingerShade);
    stroke: #1e1e1e;
    stroke-width: 1.500px;
}

.finger-band {
    fill: #c8c8c8;
    stroke: #1e1e1e;
    stroke-width: 1.500px;
}

.pins rect {
    fill: url(#pinShade);
    stroke: #1e1e1e;
    stroke-width: 2px;
}

.pin-yellow rect {
    fill: #fbcb3a;
    stroke: #1e1e1e;
    stroke-width: 2px;
}

.pin-small {
    fill: #b8b8b8;
    stroke: #1e1e1e;
    stroke-width: 1.500px;
}

.block-white {
    fill: #e8e8e8;
    stroke: #1e1e1e;
}

.logo {
    fill: none;
    stroke: #cdd8f4;
    stroke-width: 2px;
}

.logo-text {
    font-family: "Liberation Sans", sans-serif;
    font-size: 10.5px;
    font-weight: 700;
    fill: #141414;
}

.usb-shell {
    fill: #e2e2e2;
    stroke: #1e1e1e;
    stroke-width: 3px;
}

.usb-face {
    fill: #4a4a4a;
    stroke: #1e1e1e;
    stroke-width: 4px;
}

.usb-slot {
    fill: url(#slotShade);
    stroke: #1e1e1e;
    stroke-width: 2px;
}

.pcb {
    fill: #fafab2;
    stroke: #1e1e1e;
    stroke-width: 2px;
}

.sel-line {
    fill: none;
    stroke: #fff;
    stroke-width: 3px;
}

.sel-thin {
    stroke: #fff;
    stroke-width: 2.500px;
}

.sel-faint {
    stroke: #fff;
    stroke-width: 1.500px;
}

.sel-pt {
    fill: #fff;
}

.axis-v-green {
    fill: none;
    stroke: #5ff05f;
    stroke-width: 1.500px;
}

.dim {
    fill: none;
    stroke: #ff2400;
    stroke-width: 2.500px;
}

.dim-thin {
    fill: none;
    stroke: #ff2400;
    stroke-width: 1.200px;
}

.dim-fill, .dim-pts circle {
    fill: #ff2400;
}

.orange-line {
    stroke: #ff9a3c;
    stroke-width: 2px;
}

.dim-text {
    font-family: "Liberation Sans", sans-serif;
    font-size: 25px;
    fill: #ff3c1e;
    stroke: #ff3c1e;
    stroke-width: 0.300px;
    text-anchor: middle;
}

.dim-orange {
    font-family: "Liberation Sans", sans-serif;
    font-size: 27px;
    fill: #ff9a3c;
    text-anchor: middle;
}

.nav {
    fill: #c9cce8;
}

.nav-cube-small {
    fill: #b6b9d6;
}

.nav-menu {
    fill: #74759a;
}

.nav-face {
    fill: #e5e9f8;
    stroke: #c0c4dc;
}

.nav-square {
    fill: none;
    stroke: #333;
    stroke-width: 1.500px;
}

.nav-text {
    font-family: "Liberation Sans", sans-serif;
    font-size: 11px;
    fill: #222;
    text-anchor: middle;
}

.ax-b {
    stroke: #00f;
    stroke-width: 2px;
}

.ax-g {
    stroke: #0f0;
    stroke-width: 2px;
}

.ax-r {
    stroke: #f00;
    stroke-width: 2px;
}

.cross-b {
    stroke: #1c1c80;
    stroke-width: 1.500px;
}

.cross-bh {
    fill: #1c1c80;
}

.cross-g {
    stroke: #1e7a1e;
    stroke-width: 2px;
}

.cross-gh {
    fill: #1e7a1e;
}

.cross-rh {
    fill: #8a2020;
}

.cross-text {
    font-family: "Liberation Sans", sans-serif;
    font-size: 9px;
    fill: #111;
}

/* Document tabs */
.mdi-bar {
    height: 68px;
    flex: none;
    padding-left: 886px;
    background: #454545;
    border-top: 2px solid #7a7a7a;
}

.mdi-tab {
    width: 179px;
    height: 60px;
    margin-top: -2px;
    display: flex;
    align-items: center;
    gap: 14px;
    padding: 4px 0 0 10px;
    background: #454545;
    border: 1px solid #7a7a7a;
    border-top: 0;
    border-bottom: 8px solid #d49a12;
}

.mdi-tab svg {
    width: 20px;
    height: 20px;
    flex: none;
    fill: none;
    stroke: #2e2e2e;
    stroke-width: 3.500px;
}

.mdi-tab span {
    white-space: nowrap;
}

/* Status bar */
.statusbar {
    flex: 1;
    display: flex;
    align-items: flex-start;
    padding: 6px 4px 0 4px;
    background: #454545;
}

.status-msg, .status-size {
    line-height: 54px;
    white-space: nowrap;
}

.status-msg {
    font-size: 26.1px;
}

.status-size {
    margin-left: 20px;
    font-size: 25.7px;
}
```
